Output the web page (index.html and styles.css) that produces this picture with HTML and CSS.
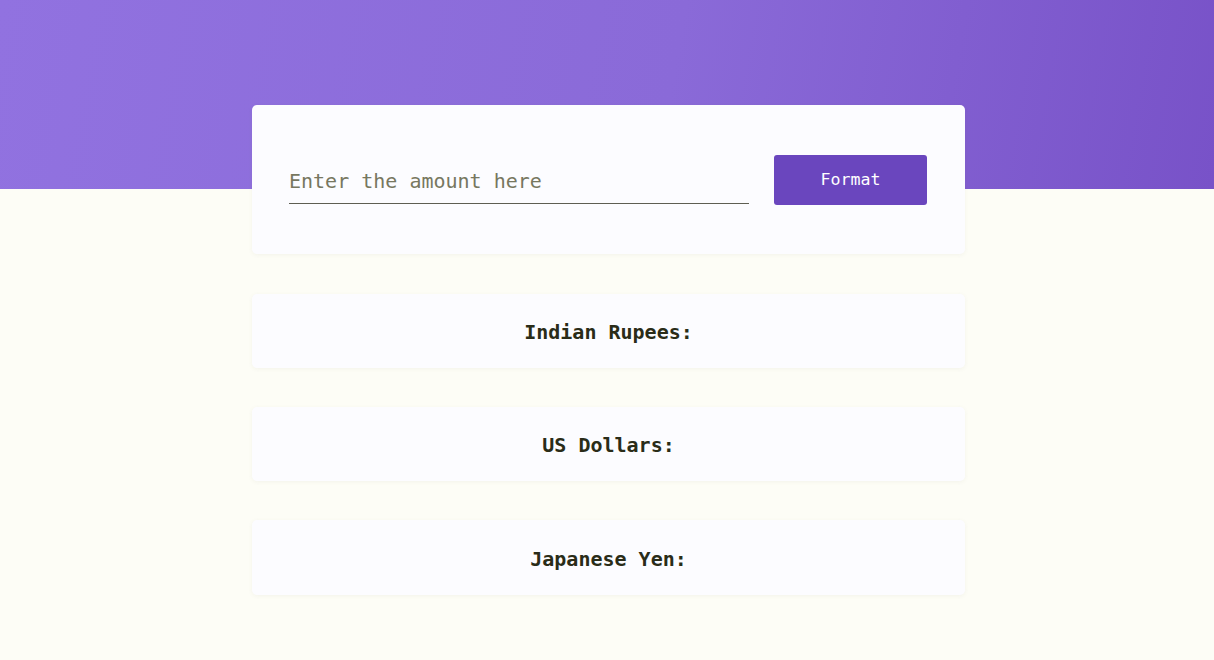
FILE: index.html
```html
<!DOCTYPE html>
<html lang="en">
<head>
<meta charset="utf-8">
<title>Currency Formatter</title>
<link rel="stylesheet" href="styles.css">
</head>
<body>
<div class="band"></div>
<main class="container">
  <section class="card form-card">
    <input class="amount" type="text" placeholder="Enter the amount here">
    <button class="format-btn" type="button">Format</button>
  </section>
  <section class="card result-card"><h2 class="label">Indian Rupees:</h2></section>
  <section class="card result-card"><h2 class="label">US Dollars:</h2></section>
  <section class="card result-card"><h2 class="label">Japanese Yen:</h2></section>
</main>
</body>
</html>
```
FILE: styles.css
```css
* { box-sizing: border-box; }
html, body { margin: 0; padding: 0; }
body {
  background: #fdfdf6;
  font-family: "DejaVu Sans Mono", "Liberation Mono", monospace;
  min-height: 660px;
  position: relative;
}
.band {
  height: 189px;
  background: linear-gradient(100deg, #9172e0 0%, #8a6ad8 55%, #7852c8 100%);
}
.container {
  width: 713px;
  margin: -84px 0 0 252px;
  display: flex;
  flex-direction: column;
  gap: 40px;
  position: relative;
}
.card {
  background: #fcfcff;
  border-radius: 5px;
  box-shadow: 0 1px 4px rgba(120, 120, 90, 0.07);
}
.form-card {
  height: 149px;
  padding: 0 38px 0 37px;
  display: flex;
  align-items: center;
  gap: 25px;
}
.amount {
  flex: 0 0 460px;
  height: 48px;
  margin-top: 1px;
  border: none;
  border-bottom: 1.5px solid #5e5e52;
  background: transparent;
  font-family: "DejaVu Sans Mono", monospace;
  font-size: 20px;
  color: #333;
  padding: 2px 0 0;
  outline: none;
}
.amount::placeholder { color: #777760; }
.format-btn {
  width: 153px;
  height: 50px;
  border: none;
  border-radius: 3px;
  background: #6a46be;
  color: #fff;
  font-family: "DejaVu Sans Mono", monospace;
  font-size: 16.6px;
  padding-top: 1px;
  cursor: pointer;
}
.result-card {
  height: 74px;
  display: flex;
  align-items: center;
  justify-content: center;
}
.result-card:last-child { height: 75px; }
.result-card + .result-card { margin-top: -1px; }
.label {
  margin: 0;
  padding: 2px 0 0;
  font-size: 20px;
  font-weight: bold;
  color: #2a2c18;
}
```
